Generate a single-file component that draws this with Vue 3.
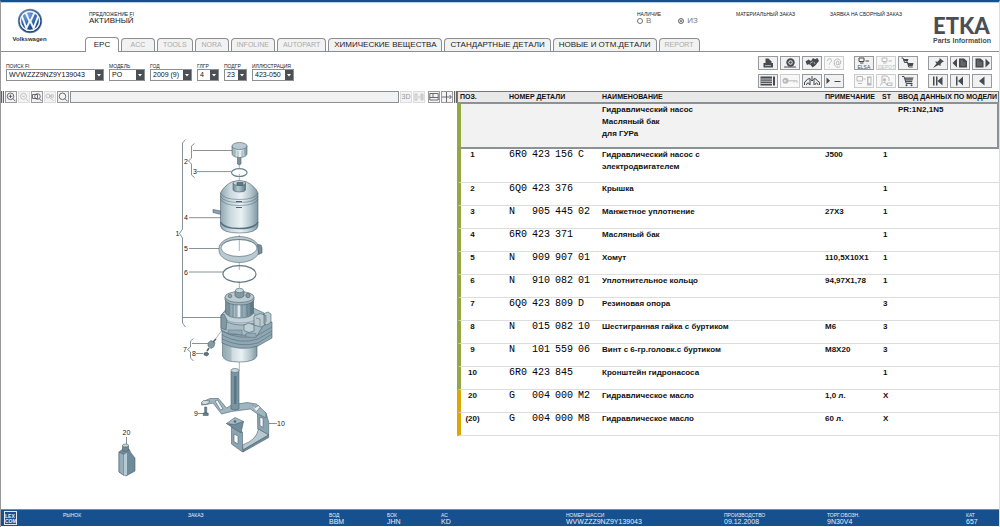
<script setup>
import { ref } from 'vue'

const tabs = [
  { label: 'EPC', state: 'active' },
  { label: 'ACC', state: 'off' },
  { label: 'TOOLS', state: 'off' },
  { label: 'NORA', state: 'off' },
  { label: 'INFOLINE', state: 'off' },
  { label: 'AUTOPART', state: 'off' },
  { label: 'ХИМИЧЕСКИЕ ВЕЩЕСТВА', state: 'on' },
  { label: 'СТАНДАРТНЫЕ ДЕТАЛИ', state: 'on' },
  { label: 'НОВЫЕ И ОТМ.ДЕТАЛИ', state: 'on' },
  { label: 'REPORT', state: 'off' }
]

const filters = [
  { id: 'vin', label: 'ПОИСК FI', value: 'WVWZZZ9NZ9Y139043' },
  { id: 'model', label: 'МОДЕЛЬ', value: 'PO' },
  { id: 'year', label: 'ГОД', value: '2009 (9)' },
  { id: 'group', label: 'ГЛГР', value: '4' },
  { id: 'sub', label: 'ПОДГР', value: '23' },
  { id: 'illustration', label: 'ИЛЛЮСТРАЦИЯ', value: '423-050' }
]

const stock = ref('from')

const parts = [
  { pos: '1', num: ['6R0', '423', '156', 'C'], name: 'Гидравлический насос с\nэлектродвигателем', note: 'J500', st: '1', tall: true },
  { pos: '2', num: ['6Q0', '423', '376'], name: 'Крышка', note: '', st: '1' },
  { pos: '3', num: ['N', '905', '445', '02'], name: 'Манжетное уплотнение', note: '27X3', st: '1' },
  { pos: '4', num: ['6R0', '423', '371'], name: 'Масляный бак', note: '', st: '1' },
  { pos: '5', num: ['N', '909', '907', '01'], name: 'Хомут', note: '110,5X10X1', st: '1' },
  { pos: '6', num: ['N', '910', '082', '01'], name: 'Уплотнительное кольцо', note: '94,97X1,78', st: '1' },
  { pos: '7', num: ['6Q0', '423', '809', 'D'], name: 'Резиновая опора', note: '', st: '3' },
  { pos: '8', num: ['N', '015', '082', '10'], name: 'Шестигранная гайка с буртиком', note: 'M6', st: '3' },
  { pos: '9', num: ['N', '101', '559', '06'], name: 'Винт с 6-гр.головк.с буртиком', note: 'M8X20', st: '3' },
  { pos: '10', num: ['6R0', '423', '845'], name: 'Кронштейн гидронасоса', note: '', st: '1' },
  { pos: '20', num: ['G', '004', '000', 'M2'], name: 'Гидравлическое масло', note: '1,0 л.', st: 'X', fluid: true },
  { pos: '(20)', num: ['G', '004', '000', 'M8'], name: 'Гидравлическое масло', note: '60 л.', st: 'X', fluid: true }
]

const footer = [
  { label: 'РЫНОК', value: '' },
  { label: 'ЗАКАЗ', value: '' },
  { label: 'ВОД', value: 'BBM' },
  { label: 'БОК', value: 'JHN' },
  { label: 'АС', value: 'KD' },
  { label: 'НОМЕР ШАССИ', value: 'WVWZZZ9NZ9Y139043' },
  { label: 'ПРОИЗВОДСТВО', value: '09.12.2008' },
  { label: 'ТОРГ.ОБОЗН.', value: '9N30V4' },
  { label: 'КАТ', value: '657' }
]
</script>

<template>
  <div class="page">
    <header class="header">
      <div class="brand">
        <svg class="vw" viewBox="0 0 26 26" aria-hidden="true">
          <defs>
            <radialGradient id="vwg" cx="0.4" cy="0.25" r="0.8">
              <stop offset="0" stop-color="#7fa9dc" />
              <stop offset="0.5" stop-color="#2c62a8" />
              <stop offset="1" stop-color="#0c2f66" />
            </radialGradient>
          </defs>
          <circle cx="13" cy="13" r="12.2" fill="#7388a5" />
          <circle cx="13" cy="13" r="11.4" fill="url(#vwg)" />
          <circle cx="13" cy="13" r="9.6" fill="none" stroke="#f3f6fa" stroke-width="1.5" />
          <path d="M8.6 4.6 L12.1 12.3 H13.9 L17.4 4.6 M4.9 8.2 L9.4 20.2 L12.4 13.8 H13.6 L16.6 20.2 L21.1 8.2" fill="none" stroke="#f3f6fa" stroke-width="1.9" />
        </svg>
        <span class="brand-name">Volkswagen</span>
      </div>
      <div class="field offer">
        <span class="tiny">ПРЕДЛОЖЕНИЕ FI</span>
        <span class="value">АКТИВНЫЙ</span>
      </div>
      <fieldset class="field stock">
        <legend class="tiny">НАЛИЧИЕ</legend>
        <div class="radios">
          <label><input v-model="stock" type="radio" name="stock" value="in" />В</label>
          <label><input v-model="stock" type="radio" name="stock" value="from" />ИЗ</label>
        </div>
      </fieldset>
      <div class="field"><span class="tiny">МАТЕРИАЛЬНЫЙ ЗАКАЗ</span></div>
      <div class="field"><span class="tiny">ЗАЯВКА НА СБОРНЫЙ ЗАКАЗ</span></div>
      <div class="etka">
        <strong>ETKA</strong>
        <span>Parts Information</span>
      </div>
      <nav class="tabs">
        <button v-for="t in tabs" :key="t.label" type="button" class="tab" :class="t.state" :disabled="t.state === 'off'">{{ t.label }}</button>
      </nav>
    </header>

    <div class="controls">
      <div class="filters">
        <div v-for="f in filters" :key="f.id" class="filter" :class="f.id">
          <label class="tiny" :for="f.id">{{ f.label }}</label>
          <span class="select">
            <select :id="f.id"><option>{{ f.value }}</option></select>
            <svg viewBox="0 0 8 10" aria-hidden="true"><rect width="8" height="10" fill="#4a5054" /><path d="M2 4h4L4 6.500z" fill="#fff" /></svg>
          </span>
        </div>
      </div>
      <div class="actions">
        <div class="block four">
          <button type="button" aria-label="Печать"><svg viewBox="0 0 18 12"><path d="M6.5 1.5h3l3 3v2h-6z" /><path d="M4.5 6h9.5v4.5h-9.5z" /><path d="M6 8.6h6" stroke="#e8e8e8" stroke-width=".7" /></svg></button>
          <button type="button" aria-label="Шины"><svg viewBox="0 0 18 12"><circle cx="9.5" cy="5.5" r="4.2" /><circle cx="9.5" cy="5.5" r="2.2" fill="#ddd" /><circle cx="9.5" cy="5.5" r="1.2" /><path d="M3 10h12" class="line" /></svg></button>
          <button type="button" aria-label="Детали"><svg viewBox="0 0 18 12"><path d="M2.500 4.500l3-2 2.500 1.500 2-3 2 1.200 2.500-1.200 1.500 2.900-2 2.300-1.500 2-3 2.400-2-2.900-2-.5-1.500.9z" /><path d="M7 6.500l3-2M11 5l1 2" stroke="#eee" stroke-width=".6" /></svg></button>
          <button type="button" disabled aria-label="Справка"><svg viewBox="0 0 18 12"><path class="line" d="M2.5 4q0-2.3 2-2.3t2 2q0 1-1.2 1.9t-1 2M4.2 9.8v.8M14 7.6q-2.6 1.4-2.8-1.2.3-2.8 2-2.4 1.1.4.6 3.2.3 1 1.6-.3 1.2-3.2-1.2-4.6-3.6-1.2-5 2.2-.8 4.3 2.4 5.6 2.2.5 3.6-.4" /></svg></button>
          <button type="button" aria-label="Список"><svg viewBox="0 0 18 12"><path d="M1.5 1.5h11.5v9h-11.5zM14 1.5h2v9h-2z" /><path d="M1.5 4h11.5M1.5 6.2h11.5M1.5 8.4h11.5" stroke="#f1f1f1" stroke-width=".8" /></svg></button>
          <button type="button" disabled aria-label="Ключ"><svg viewBox="0 0 18 12"><circle cx="4.5" cy="5.8" r="3" /><circle cx="4" cy="5.8" r=".9" fill="#fff" /><path class="line" d="M7 5.8h9v2M13 5.8v1.7" /></svg></button>
          <button type="button" aria-label="Кузов"><svg viewBox="0 0 18 12"><path class="line" d="M1.500 10V8q0-1.500 1.500-2 1-2.500 4-2.500V10M11 10V3.500q2.500 0 3.500 2.500 2 .5 2 2v2M3.500 10q0-2 1.500-2t1.500 2M12 10q0-2 1.500-2t1.500 2M9 1v5M7.500 4.500L9 6l1.500-1.500" /></svg></button>
          <button type="button" aria-label="Свернуть"><svg viewBox="0 0 18 12"><path d="M1.5 2.5L5 5.7 1.5 9z" /><path class="line" d="M9.5 6.5h6" /></svg></button>
        </div>
        <div class="block three">
          <button type="button" aria-label="ELSA"><svg viewBox="0 0 18 12"><path class="line" d="M4 1h5v3.500H4zM5 6h3.500M10.500 4h3.500" /><text x="2.500" y="11.500">ELSA</text></svg></button>
          <button type="button" disabled aria-label="DEPOT"><svg viewBox="0 0 18 12"><path class="line" d="M5 1h5v3.500H5zM6 6h3.500M11.500 4h3.500" /><text x="1" y="11.500">DEPOT</text></svg></button>
          <button type="button" aria-label="Корзины"><svg viewBox="0 0 18 12"><path d="M4.500 2h5l-.7 2.300h-3.500zM8.500 6h6l-.8 3h-4.400z" /><path class="line" d="M2.500 1h1.500l1.500 4.500h3.500M7 5h1.500l1.200 5h4" /></svg></button>
          <button type="button" disabled aria-label="Передача"><svg viewBox="0 0 18 12"><path class="line" d="M2 1.500h5.500v4.500H2zM3 8.500h4M8.500 4h2" /><path d="M12 1.500h4.500v9H12z" /><path d="M13.500 3h2v5h-2z" fill="#fff" /></svg></button>
          <button type="button" disabled aria-label="Клиент"><svg viewBox="0 0 18 12"><path class="line" d="M5 1h5l2 2v3M5 1v6M3.500 10.500q0-3 3-3h2l1.500 3M10.500 8h4.500v2.500h-4.500z" /><circle cx="7.500" cy="4.800" r="1.600" /></svg></button>
          <button type="button" aria-label="Корзина"><svg viewBox="0 0 18 12"><path d="M5.500 2.500h9l-1.500 4.700H6.800z" /><path class="line" d="M3 1.500h2l2.200 7h6.300" /><path d="M6.500 4h8M7 5.600h7" stroke="#eee" stroke-width=".5" /><circle cx="7.500" cy="10.300" r="1" /><circle cx="12.500" cy="10.300" r="1" /></svg></button>
        </div>
        <div class="block three">
          <button type="button" aria-label="Закрепить"><svg viewBox="0 0 18 12"><path d="M10.500 1l4.500 3.500-1.500.5-2 2 .2 2L9.500 8 4 11l3.500-4.500L6 4.500l2.500.2 2-2z" /></svg></button>
          <button type="button" aria-label="Предыдущая страница"><svg viewBox="0 0 18 12"><path d="M6 1.500v9L1.500 6zM8 1.500h5l3 2.500v6.500H8z" /><path d="M9.500 4h2.500M9.500 6h5M9.500 8h5" stroke="#aaa" stroke-width=".6" /></svg></button>
          <button type="button" aria-label="Следующая страница"><svg viewBox="0 0 18 12"><path d="M12.500 1.500v9L17 6zM2.500 1.500h5l3 2.500v6.500h-8z" /><path d="M4 4h2.500M4 6h5M4 8h5" stroke="#aaa" stroke-width=".6" /></svg></button>
          <button type="button" aria-label="В начало"><svg viewBox="0 0 18 12"><path d="M4 1.500h1.500v9H4zM7 1.500h1.500v9H7zM13.500 1.500v9L8.500 6z" /></svg></button>
          <button type="button" aria-label="К первому"><svg viewBox="0 0 18 12"><path d="M5 1.500h1.500v9H5zM12 1.500v9L7 6z" /></svg></button>
          <button type="button" aria-label="Назад"><svg viewBox="0 0 18 12"><path d="M11.500 1.500v9L6 6z" /></svg></button>
        </div>
      </div>
    </div>

    <main class="main">
      <section class="drawing">
        <div class="drawbar">
          <i class="grip"></i>
          <button type="button" aria-label="Увеличить"><svg viewBox="0 0 10 10"><circle cx="4.500" cy="4.300" r="3.300" /><path d="M7 6.800L9.500 9.300M4.500 2.500v3.600M2.700 4.300h3.600" /></svg></button>
          <button type="button" disabled aria-label="Уменьшить"><svg viewBox="0 0 10 10"><circle cx="4.500" cy="4.300" r="3" /><path d="M7 6.800L9.500 9.300M3 4.300h3" /></svg></button>
          <button type="button" aria-label="Область"><svg viewBox="0 0 10 10"><circle cx="5.500" cy="4.500" r="2.800" /><path d="M7.500 6.800L9.500 9M.5 2.500h5v4h-5z" /></svg></button>
          <button type="button" disabled aria-label="Сдвиг"><svg viewBox="0 0 10 10"><circle cx="3" cy="4" r="2" /><circle cx="7" cy="4" r="1.500" /><path d="M4.500 5.500l4 3M4 4h3" /></svg></button>
          <button type="button" aria-label="Лупа"><svg viewBox="0 0 10 10"><circle cx="4.500" cy="4.300" r="3.300" /><path d="M7 6.800L9.500 9.300" /></svg></button>
          <div class="caption"></div>
          <button type="button" class="three-d" disabled>3D</button>
          <button type="button" disabled aria-label="Сравнить"><svg viewBox="0 0 10 10"><path d="M1 2h2v6H1zM4 5h2M7 2h2v6H7zM7 4h2M7 6h2" /></svg></button>
          <button type="button" class="spaced" aria-label="Окна"><svg viewBox="0 0 10 10"><path d="M.8 1.500h8.400v6.500H.8zM.8 5.500h8.400M4 1.500v4" /></svg></button>
          <button type="button" aria-label="Разделитель"><svg viewBox="0 0 10 10"><path d="M0 5h9M4.500 0v10M7.500 3l2 2-2 2" /></svg></button>
          <i class="grip"></i>
        </div>
        <svg class="exploded" viewBox="1 103 456 404" role="img" aria-label="Гидравлический насос">
          <defs>
            <linearGradient id="metal" x1="0" x2="1">
              <stop offset="0" stop-color="#8fa7b1" />
              <stop offset="0.25" stop-color="#c9d7dd" />
              <stop offset="0.55" stop-color="#eaf1f4" />
              <stop offset="0.8" stop-color="#b4c7cf" />
              <stop offset="1" stop-color="#7d97a2" />
            </linearGradient>
            <linearGradient id="dark" x1="0" x2="1">
              <stop offset="0" stop-color="#6d8995" />
              <stop offset="0.4" stop-color="#b5c8d0" />
              <stop offset="0.7" stop-color="#8ba5b0" />
              <stop offset="1" stop-color="#5b7784" />
            </linearGradient>
          </defs>
          <!-- callout lines -->
          <g fill="none" stroke="#6a767d" stroke-width=".8">
            <path d="M185.500 139.500l-3 3.500v86l-3 4.500 3 4.500v85l3 4M194.500 143.500l-3 2.500v12l-3 3 3 3v11l3 2.500M193 150.500h39M197 171.600h34M189 217.700h32M189 248.500h30M189 272h34M183 317.500h39M193.500 338.500l-3 2.500v6l-3 2.500 3 2.500v6l3 3M192 343.500h16M196 353.500h7M198 413.500h6M269 423.500h8M126.500 437v7" />
            <path d="M239.300 164v4M239.300 174v8M239.300 235v16M239.300 263v7M239.300 281v7M239.300 362v9M214 341l11-15" stroke="#8fa4ae" />
          </g>
          <g stroke="#4d626c" stroke-width=".6" stroke-linejoin="round">
            <!-- cap -->
            <path d="M237.500 155h3.500v9q-1.700 1.500-3.500 0z" fill="#7c929c" />
            <path d="M232 146v8q1 3.500 7.500 3.500t7.500-3.500v-8z" fill="url(#metal)" />
            <ellipse cx="239.500" cy="146" rx="7.500" ry="3.500" fill="#b9c9d1" />
            <path d="M235 150v6M238 151v6M242 151v6M245 149v6" stroke-width=".35" />
            <ellipse cx="239.300" cy="172.600" rx="7.800" ry="3.900" fill="none" stroke="#698490" stroke-width="1.200" />
            <!-- reservoir -->
            <path d="M221 211l-8-1.500v3l8 2z" fill="#8ca2ac" />
            <path d="M220.500 193q3-7 12-11.500h13.500q9 4.500 12 11.500v33q-1 7-18.700 7t-18.800-7z" fill="url(#metal)" />
            <path d="M220.500 193q3 6.500 18.800 6.500t18.700-6.500M220.500 196q3 6.500 18.800 6.500t18.700-6.500M220.500 199q3 6.500 18.800 6.500t18.700-6.500" fill="none" stroke-width=".5" />
            <path d="M220.500 222q3 6.500 18.800 6.500t18.700-6.500" fill="none" stroke="#527282" stroke-width="1.600" />
            <path d="M233 183v7q1 2 6.500 2t6-2v-7z" fill="url(#dark)" />
            <ellipse cx="239.300" cy="183" rx="6.300" ry="2.500" fill="#c7d5da" />
            <path d="M237 182v3.500h6V182" fill="#5e7782" />
            <path d="M236 201.500h6M236 207.500h6" stroke-width="1" />
            <!-- clamp -->
            <path fill-rule="evenodd" d="M219 248.500a20 12 0 0 1 40 0v2a20 12 0 0 1-40 0zM221 248a18 8.500 0 0 0 36 0a18 8.500 0 0 0-36 0z" fill="#b9cad1" />
            <path d="M221 246q3-6.500 18-6.500t18 6.500" fill="none" stroke-width=".4" />
            <path d="M257.500 244.500l3.500.5 1 3v5l-3.500 1.500z" fill="#738d99" />
            <ellipse cx="239.500" cy="274" rx="16.500" ry="8.300" fill="none" stroke="#607a86" stroke-width="1.200" />
            <!-- pump -->
            <path d="M222.500 337v19q2 6 17 6t17.500-6v-19z" fill="url(#metal)" />
            <path d="M222.500 341v15q2 6 9 6v-18z" fill="#8fa9b4" opacity=".5" stroke="none" />
            <path d="M222 329l9-7h30l11 0v16l-14 8q-18 6-36-3z" fill="#8ea7b2" />
            <path d="M222 331q18 10 36 4l14-8M222 335q18 10 36 4l14-8M222 339q18 9 36 4l14-9" fill="none" stroke-width=".5" />
            <path d="M221 316v14l8 4 28 2 7-12v-11l-17-8H229z" fill="#a7bcc5" />
            <path d="M221 316q1-4 6-5h23q7 3 8 9-3 5-18 5-15-1-19-9z" fill="#c3d2d9" />
            <path d="M223 317q5 6 17 6t16-4" fill="none" stroke-width=".4" />
            <path d="M225.500 297v16q3 5 14 5t14-5v-16z" fill="url(#dark)" />
            <path d="M229 302v13M233 303v14M236 303v14M242 303v14M247 302v14M251 301v13" stroke="#4f6975" />
            <path d="M238 303h2v14h-2z" fill="#e0e9ed" stroke="none" />
            <path d="M225 297v3q3 5 14.500 5t14.500-5v-3z" fill="#9db3bc" />
            <ellipse cx="239.500" cy="297" rx="14.500" ry="5.500" fill="#bccbd2" />
            <path d="M235 291v5q2 2 4.500 2t4.500-2v-5z" fill="#8099a4" />
            <ellipse cx="239.500" cy="290.500" rx="4" ry="2.200" fill="#cad7dc" />
            <circle cx="230" cy="296" r="1.800" fill="#8fa7b1" /><circle cx="248" cy="295.500" r="2.200" fill="#8099a4" />
            <path d="M254 316l6-2.500 5 1.500v10l-4 2-7-2zM264 313.500l4-1.500 3 2v8l-4 3-3-1z" fill="#b9cad1" />
            <path d="M256 318l4 1v7M266 315v7" fill="none" stroke-width=".5" />
            <path d="M244 325l5-2 5 2v6l-5 1.500-5-2z" fill="#c0d0d7" />
            <path d="M221 315l3-1 3 6-1 10-5-2z" fill="#8099a5" />
            <path d="M228 330h14v5l-14-2zM246 333l10 .5v4l-10-.5z" fill="#93abb6" stroke-width=".4" />
            <!-- rubber mount and nut -->
            <path d="M208 343l3-2.500 4 2-1 4-3 2-3-2.500z" fill="#879ba4" /><path d="M213 342l3-3M209 348l-2 3" stroke-width="1.500" /><path d="M204 353l3-1 2 2-2 2-3-1z" fill="#61747d" />
            <!-- bracket -->
            <path d="M257.500 411l8.500 2 2.700 9v13l-11-6z" fill="#8aa5b1" />
            <path d="M242.500 445q14-5 16-16l10.200 6-25.700 15z" fill="#b7c9d0" />
            <path d="M243 450l25.700-15v2.500L243 452z" fill="#718d99" />
            <path d="M231.500 427l11 5v20l-11-8z" fill="#8aa5b1" />
            <path d="M234 434l4 2v8l-4-2.500zM260 417l3 1.500v9l-3-2z" fill="#fff" />
            <path d="M231.500 405l15.500-2.500 9.500 1.500 9.500 9v5l-4-2-6-3-5.500-4-19 2.500-10 2.500-8.500-11-6.500 1.500-5 .5.500-3 8-3.500h8.500l8 9.500z" fill="#9fb6c0" />
            <path d="M201.500 402.500q1-2.500 4.500-2l4 .5q-1 3-4.500 3.500-4 .5-4-2z" fill="#d4dfe3" />
            <path d="M215 401l2.500-1 5.500 9-2.500 1z" fill="#f2f6f7" />
            <path d="M252 404.500l3 3 3.500-2 1.500 2-3.500 4" fill="#eef3f5" />
            <path d="M231 371v38q4 2 8 0v-38z" fill="#7895a3" />
            <path d="M234 376h2.500v28H234z" fill="#587684" stroke="none" />
            <ellipse cx="235" cy="370.500" rx="4" ry="2" fill="#cbd7dc" />
            <path d="M226.500 423.500l8 1 9-3-2.500 11.500-8-5z" fill="#6f8d9a" /><path d="M226.500 423.500l8.500-6 8.500 4-9 3z" fill="#a3b9c3" /><circle cx="235" cy="421.500" r="1" fill="#566f7b" />
            <path d="M204.700 407h2v6h-2zM203.200 413h5v2.500h-5z" fill="#6a818c" />
            <!-- oil bottle -->
            <path d="M119 452l4-3h6l2 4 4 5v13l-9 5-7-4z" fill="#6d8b99" />
            <path d="M119 452l5 2.500v21l-5-3.500z" fill="#96aeb9" />
            <path d="M124 454.500l3-1.500v21.500l-1 1-2 0z" fill="#b7c9d1" stroke="none" />
            <path d="M122.500 445.500v5q3 2 6 0v-5z" fill="#6d8793" />
            <ellipse cx="125.500" cy="445.500" rx="3" ry="1.500" fill="#c8d5da" />
          </g>
          <g class="callouts">
            <text x="175.500" y="236">1</text><text x="184" y="163.500">2</text><text x="193" y="174">3</text><text x="184" y="220.300">4</text>
            <text x="184" y="251">5</text><text x="184" y="274.500">6</text><text x="183" y="351.500">7</text><text x="192" y="356">8</text>
            <text x="194" y="416">9</text><text x="277" y="426">10</text><text x="122.500" y="435">20</text>
          </g>
        </svg>
      </section>

      <section class="list">
        <table>
          <colgroup><col class="c-pos" /><col class="c-num" /><col /><col class="c-note" /><col class="c-st" /><col class="c-pr" /></colgroup>
          <thead>
            <tr><th>ПОЗ.</th><th>НОМЕР ДЕТАЛИ</th><th>НАИМЕНОВАНИЕ</th><th>ПРИМЕЧАНИЕ</th><th>ST</th><th>ВВОД ДАННЫХ ПО МОДЕЛИ</th></tr>
          </thead>
          <tbody>
            <tr class="selected"><td></td><td></td><td class="name">Гидравлический насос<br />Масляный бак<br />для ГУРа</td><td></td><td></td><td>PR:1N2,1N5</td></tr>
            <tr v-for="p in parts" :key="p.pos" :class="{ tall: p.tall, fluid: p.fluid }">
              <td class="pos">{{ p.pos }}</td>
              <td class="num"><span class="segments"><span v-for="(s, i) in p.num" :key="i">{{ s }}</span></span></td>
              <td class="name">{{ p.name }}</td>
              <td>{{ p.note }}</td>
              <td class="qty">{{ p.st }}</td>
              <td></td>
            </tr>
          </tbody>
        </table>
      </section>
    </main>

    <footer class="footer">
      <div class="lex">LEX<br />COM</div>
      <div v-for="f in footer" :key="f.label" class="cell"><span class="tiny">{{ f.label }}</span><span class="value">{{ f.value }}</span></div>
    </footer>
  </div>
</template>

<style>
body { background: #fff; }
</style>

<style scoped>
.page {
  box-sizing: border-box;
  min-height: 100vh;
  display: flex;
  flex-direction: column;
  font-family: "Liberation Sans", Arial, sans-serif;
  font-size: 7px;
  line-height: 8px;
  color: #222;
  border-top: 2px solid #17508e;
  border-left: 1px solid #999;
  border-right: 1px solid #ddd;
  padding-bottom: 1px;
}
.page * { box-sizing: border-box; }
button, select, input { font: inherit; margin: 0; }
.tiny { font-size: 5px; line-height: 6px; white-space: nowrap; }
.value { font-size: 7px; line-height: 8px; }

.header {
  display: grid;
  grid-template-columns: 88px 1fr 99px 94px 103px 66px;
  grid-template-rows: 33px 15px;
  border-top: 1px solid #b5d0ea;
  border-bottom: 1px solid #8b8f92;
}
.brand {
  grid-row: 1 / 3;
  width: 57px;
  padding-top: 5px;
  display: flex;
  flex-direction: column;
  align-items: center;
  gap: 2px;
}
.vw { width: 26px; height: 26px; }
.brand-name { font-size: 6px; line-height: 7px; font-weight: bold; color: #333; }
.field { display: flex; flex-direction: column; padding-top: 8px; }
.offer .value { font-size: 8px; }
fieldset { border: 0; margin: 0; padding: 0; min-width: 0; }
legend { padding: 0; float: left; }
.radios { display: flex; gap: 27px; color: #777; font-size: 8px; }
.radios label { display: flex; align-items: center; gap: 3px; }
.radios input {
  appearance: none;
  width: 6px;
  height: 6px;
  border: 1px solid #777;
  border-radius: 50%;
  background: #fff;
}
.radios input:checked { background: #666; box-shadow: inset 0 0 0 1px #fff; }
.etka {
  grid-column: 6;
  grid-row: 1 / 3;
  padding-top: 12px;
  display: flex;
  flex-direction: column;
  color: #4b4f54;
  white-space: nowrap;
}
.etka strong { font: 900 22px/22px Lato, sans-serif; }
.etka span { font-weight: bold; font-size: 7px; line-height: 8px; }
.tabs {
  grid-column: 2 / 6;
  grid-row: 2;
  margin-left: -4px;
  display: flex;
  align-items: flex-end;
  gap: 2px;
}
.tab {
  height: 13px;
  min-width: 34px;
  padding: 0 5px;
  border: 1px solid #8b8f92;
  border-bottom: 0;
  border-radius: 4px 4px 0 0;
  background: #f2f2f2;
  color: #222;
  font-size: 8px;
  white-space: nowrap;
}
.tab.off { color: #aaa; font-size: 7px; }
.tab.active { height: 15px; margin-bottom: -1px; background: #fff; }

.controls {
  display: flex;
  justify-content: space-between;
  align-items: flex-start;
  padding: 4px 7px 0 5px;
  height: 39px;
}
.filters { display: flex; gap: 5px; padding-top: 7px; }
.filter { display: flex; flex-direction: column; }
.select {
  display: flex;
  align-items: center;
  height: 12px;
  border: 1px solid #8b8f92;
  background: #fff;
}
.select select {
  flex: 1;
  min-width: 0;
  height: 10px;
  appearance: none;
  border: 0;
  border-radius: 0;
  padding: 0 0 0 2px;
  background: transparent;
  color: #111;
}
.select svg { width: 8px; height: 10px; }
.vin { width: 98px; }
.model { width: 36px; }
.year { width: 42px; }
.group { width: 22px; }
.sub { width: 23px; }
.illustration { width: 42px; }

.actions { display: flex; gap: 10px; }
.block { display: grid; gap: 4px 2px; }
.four { grid-template-columns: repeat(4, 20px); }
.three { grid-template-columns: repeat(3, 20px); }
.actions button {
  width: 20px;
  height: 14px;
  padding: 0;
  display: flex;
  border: 1px solid #969a9d;
  background: #f1f1f1;
}
.actions svg { width: 18px; height: 12px; fill: #454b50; }
.actions .line { fill: none; stroke: #454b50; stroke-width: 1; }
.actions text { font-size: 5px; }
.actions button:disabled { border-color: #ccc; background: #f8f8f8; }
.actions button:disabled svg { opacity: .35; }

.main { flex: 1; display: flex; }
.drawing { flex: 0 0 456px; display: flex; flex-direction: column; }
.drawbar { display: flex; gap: 1px; height: 12px; align-items: stretch; }
.drawbar button {
  width: 12px;
  padding: 0;
  display: flex;
  align-items: center;
  justify-content: center;
  border: 1px solid #9a9a9a;
  background: #f3f3f3;
  color: #999;
}
.drawbar button:disabled { border-color: #ddd; color: #999; }
.drawbar button:disabled svg { opacity: .35; }
.drawbar svg { width: 10px; height: 10px; fill: none; stroke: #484d52; stroke-width: .8; }
.drawbar .spaced { margin-left: 2px; }
.grip { width: 3px; border: 1px solid #666; border-width: 0 1px; background: #ddd; }
.caption { flex: 1; border: 1px solid #8b8f92; background: #f2f2f2; }
.exploded { display: block; width: 100%; height: auto; }
.callouts { font-size: 7px; fill: #222; }

.list { flex: 1; min-width: 0; }
table { width: 100%; table-layout: fixed; border-collapse: separate; border-spacing: 0; color: #111; }
.c-pos { width: 52px; }
.c-num { width: 93px; }
.c-note { width: 57px; }
.c-st { width: 16px; }
.c-pr { width: 101px; }
th {
  height: 11px;
  padding: 0;
  text-align: left;
  font-size: 7px;
  line-height: 8px;
  white-space: nowrap;
  background: #e9e9e9;
  border-top: 1px solid #777;
}
th:first-child { padding-left: 2px; border-left: 1px solid #777; }
th:last-child { border-right: 1px solid #777; }
td {
  height: 23px;
  padding: 0;
  vertical-align: top;
  font-size: 8px;
  line-height: 12px;
  font-weight: bold;
  border-bottom: 1px solid #ddd;
}
td:first-child { border-left: 4px solid #93a83f; }
.fluid td:first-child { border-left-color: #dba700; }
.name { white-space: pre-line; }
.pos { text-align: center; padding-right: 25px; white-space: nowrap; }
.qty { padding-left: 1px; }
.selected td { height: 47px; background: #f2f2f2; border-top: 2px solid #8a9296; border-bottom: 2px solid #8a9296; }
.selected td:last-child { border-right: 2px solid #8a9296; }
.tall td { height: 34px; }
.segments {
  display: grid;
  grid-template-columns: repeat(4, 23px);
  font-family: "Liberation Mono", "Courier New", monospace;
  font-size: 10px;
  font-weight: normal;
  color: #000;
}

.footer {
  display: grid;
  grid-template-columns: 62px 125fr 141fr 58fr 54fr 125fr 158fr 103fr 139fr 33fr;
  height: 17px;
  border-top: 1px solid #6e8fb4;
  background: #17508e;
  color: #e7eef6;
}
.cell { display: flex; flex-direction: column; padding-top: 2px; white-space: nowrap; }
.lex {
  width: 13px;
  height: 14px;
  margin: 1px 0 0 3px;
  border: 1px solid #dfe8f2;
  font-size: 5px;
  line-height: 5px;
  padding-top: 2px;
  font-weight: bold;
}
</style>
